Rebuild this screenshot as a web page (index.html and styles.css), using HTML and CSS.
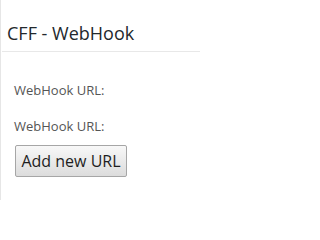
FILE: index.html
```html
<!DOCTYPE html>
<html>
<head>
<meta charset="utf-8">
<link rel="stylesheet" href="styles.css">
</head>
<body>
<div class="panel">
  <h1 class="title">CFF - WebHook</h1>
  <div class="content">
    <div class="label">WebHook URL:</div>
    <div class="label label-last">WebHook URL:</div>
    <button class="btn">Add new URL</button>
  </div>
</div>
</body>
</html>
```
FILE: styles.css
```css
html, body {
  margin: 0;
  padding: 0;
  background: #fff;
}
body {
  width: 200px;
  height: 200px;
  overflow: hidden;
}
.panel {
  height: 200px;
  border-left: 1px solid #e6e6e6;
  font-family: "Open Sans", sans-serif;
}
.title {
  margin: 0 0 0 1px;
  padding: 21px 0 0 5px;
  height: 30px;
  font-size: 18px;
  font-weight: 400;
  line-height: 24px;
  color: #23282d;
  border-bottom: 1px solid #e8e8e8;
}
.content {
  display: flex;
  flex-direction: column;
  align-items: flex-start;
  padding: 29px 0 0 13px;
}
.label {
  font-size: 13px;
  line-height: 18px;
  color: #555;
  margin-bottom: 18px;
}
.label-last {
  margin-bottom: 10px;
}
.btn {
  display: block;
  margin-left: 1px;
  width: 112px;
  height: 32px;
  padding: 0;
  font-family: "Open Sans", sans-serif;
  font-size: 16px;
  color: #1e1e1e;
  border: 1px solid #a6a6a6;
  border-radius: 2px;
  background: linear-gradient(#f8f8f8, #dcdcdc);
}
```
